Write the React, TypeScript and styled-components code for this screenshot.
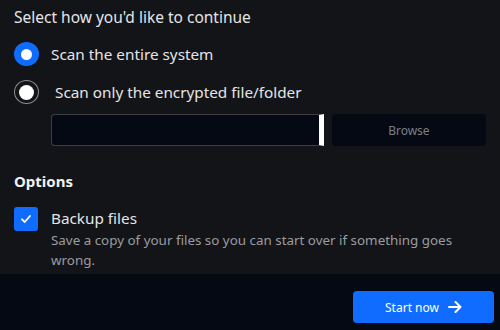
import React from "react";
import styled, { createGlobalStyle } from "styled-components";

const Global = createGlobalStyle`
  html, body { margin: 0; padding: 0; background: #131417; }
  body { font-family: "Segoe UI", "Noto Sans", "Open Sans", sans-serif; }
`;

const Page = styled.div`
  width: 500px;
  height: 330px;
  display: flex;
  flex-direction: column;
  background: #131417;
  color: #e6e7ea;
  overflow: hidden;
`;

const Body = styled.div`
  flex: 1;
  padding: 6px 14px 0 14px;
  display: flex;
  flex-direction: column;
`;

const Title = styled.div`
  font-size: 15.5px;
  line-height: 22px;
  color: #e4e5e8;
`;

const RadioRow = styled.label<{ $gap: number }>`
  display: flex;
  align-items: center;
  gap: ${(p) => p.$gap}px;
  height: 24px;
  font-size: 15.3px;
  color: #e4e5e8;
  margin-top: 14px;
`;

const RadioDot = styled.span<{ $checked?: boolean }>`
  width: 25px;
  height: 24px;
  box-sizing: border-box;
  border-radius: 50%;
  flex: none;
  display: flex;
  align-items: center;
  justify-content: center;
  background: ${(p) => (p.$checked ? "#0f6cff" : "#131417")};
  border: ${(p) => (p.$checked ? "none" : "1.5px solid #8a8c91")};
  &::after {
    content: "";
    width: ${(p) => (p.$checked ? 11 : 15)}px;
    height: ${(p) => (p.$checked ? 11 : 15)}px;
    border-radius: 50%;
    background: #ffffff;
  }
`;

const PathRow = styled.div`
  display: flex;
  gap: 8px;
  margin: 10px 0 0 37px;
  height: 32px;
`;

const PathInput = styled.div`
  width: 276px;
  box-sizing: border-box;
  border: 1px solid #3b3e45;
  border-right: 5px solid #ffffff;
  border-radius: 4px 0 0 4px;
  background: #050914;
`;

const BrowseButton = styled.button`
  width: 156px;
  border: none;
  border-radius: 4px;
  background: #050914;
  color: #7c7f87;
  font-family: inherit;
  font-size: 12px;
`;

const SectionTitle = styled.div`
  margin-top: 25px;
  font-size: 15px;
  font-weight: 700;
  line-height: 20px;
  color: #f0f1f3;
`;

const CheckRow = styled.div`
  display: flex;
  gap: 13px;
  margin-top: 16px;
`;

const CheckBox = styled.span`
  width: 24px;
  height: 24px;
  border-radius: 3px;
  background: #0f6cff;
  flex: none;
  display: flex;
  align-items: center;
  justify-content: center;
`;

const CheckText = styled.div`
  display: flex;
  flex-direction: column;
`;

const CheckLabel = styled.div`
  font-size: 15.3px;
  line-height: 22px;
  color: #e4e5e8;
`;

const CheckDesc = styled.div`
  font-size: 13.4px;
  line-height: 20px;
  margin-top: 1px;
  color: #9a9ca2;
`;

const Footer = styled.div`
  height: 56px;
  background: #050914;
  display: flex;
  align-items: center;
  justify-content: flex-end;
  padding: 0 6px 0 0;
`;

const StartButton = styled.button`
  width: 141px;
  height: 32px;
  margin-top: 10px;
  border: none;
  border-radius: 4px;
  background: #0f6cff;
  color: #ffffff;
  font-family: inherit;
  font-size: 12px;
  display: flex;
  align-items: center;
  justify-content: center;
  gap: 9px;
`;

export default function App() {
  return (
    <Page>
      <Global />
      <Body>
        <Title>Select how you'd like to continue</Title>
        <RadioRow $gap={12}>
          <RadioDot $checked />
          Scan the entire system
        </RadioRow>
        <RadioRow $gap={16}>
          <RadioDot />
          Scan only the encrypted file/folder
        </RadioRow>
        <PathRow>
          <PathInput />
          <BrowseButton>Browse</BrowseButton>
        </PathRow>
        <SectionTitle>Options</SectionTitle>
        <CheckRow>
          <CheckBox>
            <svg width="12" height="12" viewBox="0 0 12 12" fill="none">
              <path d="M2 6.3 L4.8 9 L10 3" stroke="#fff" strokeWidth="1.8" strokeLinecap="round" strokeLinejoin="round" />
            </svg>
          </CheckBox>
          <CheckText>
            <CheckLabel>Backup files</CheckLabel>
            <CheckDesc>Save a copy of your files so you can start over if something goes wrong.</CheckDesc>
          </CheckText>
        </CheckRow>
      </Body>
      <Footer>
        <StartButton>
          Start now
          <svg width="14" height="12" viewBox="0 0 14 12" fill="none">
            <path d="M1 6 H12.5 M7.5 1 L12.5 6 L7.5 11" stroke="#fff" strokeWidth="2" strokeLinecap="round" strokeLinejoin="round" />
          </svg>
        </StartButton>
      </Footer>
    </Page>
  );
}
